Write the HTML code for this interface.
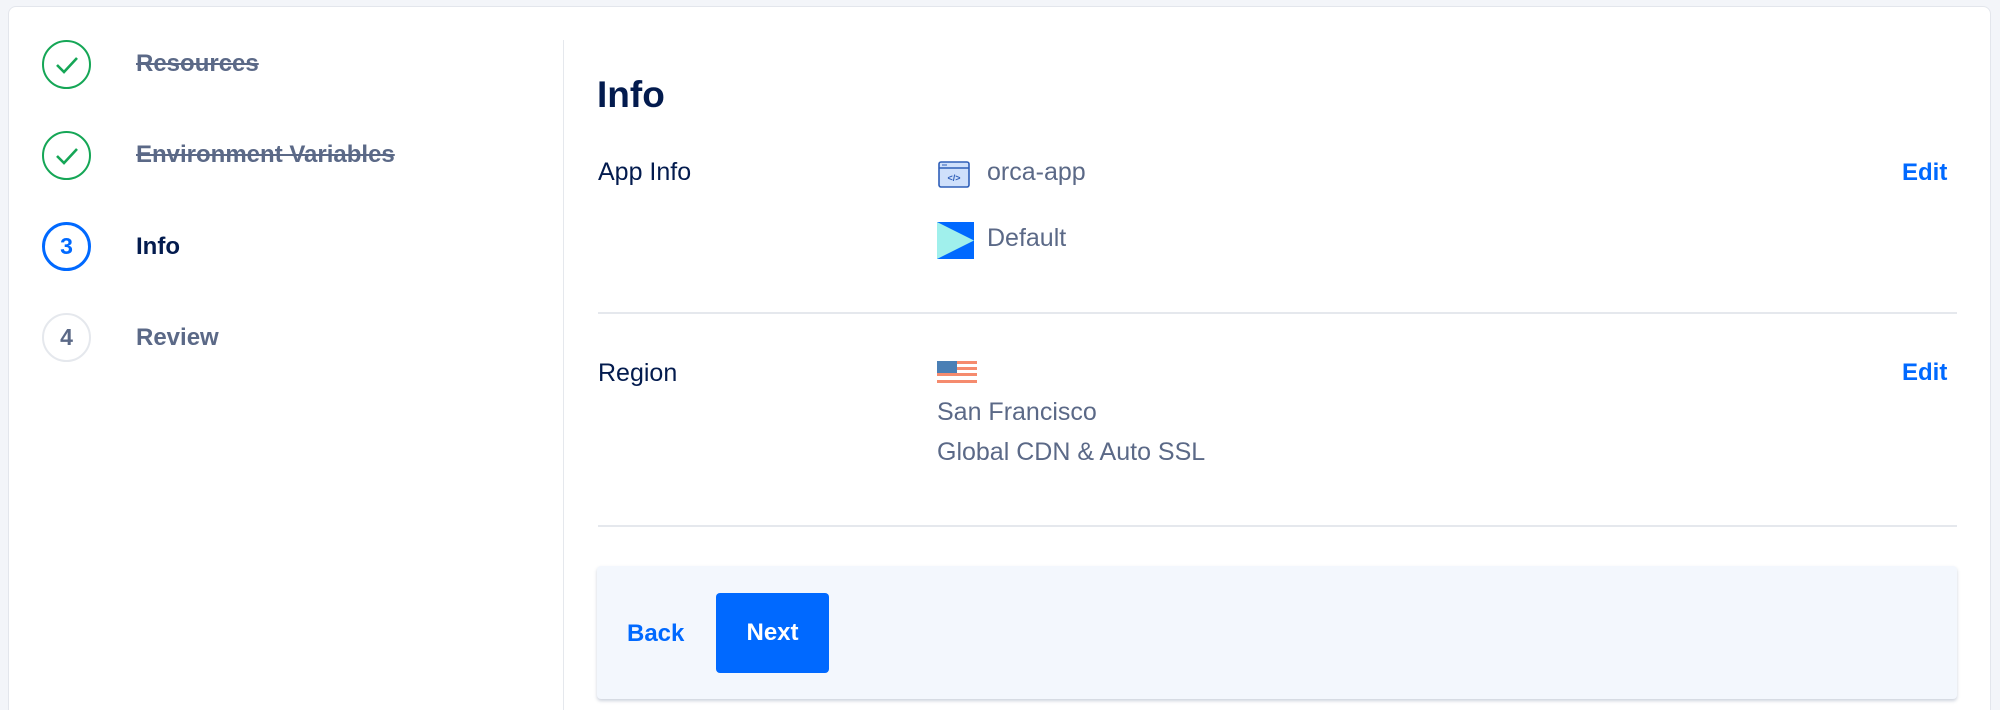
<!DOCTYPE html>
<html style="overflow:hidden;height:710px"><head><meta charset="utf-8"><style>
*{margin:0;padding:0;box-sizing:border-box}
body{width:2000px;height:710px;background:#f3f5f9;position:relative;overflow:hidden;font-family:"Liberation Sans",sans-serif}
.card{position:absolute;left:8px;top:6px;width:1983px;height:704px;background:#fff;border:1px solid #e3e6ec;border-bottom:none;border-radius:8px 8px 0 0}
.a{position:absolute;white-space:nowrap}
.c{position:absolute;left:42px;width:49px;height:49px;border-radius:50%;display:flex;align-items:center;justify-content:center;font-size:23px}
.lbl{position:absolute;left:136px;font-size:24px;line-height:24px}
.strike{color:#5b6987;text-decoration:line-through}
.t{font-size:25px;line-height:25px;color:#031b4e}
.g{font-size:25px;line-height:25px;color:#5b6987}
.edit{font-size:24px;line-height:24px;color:#0069ff;font-weight:bold}
</style></head><body>
<div class="card"></div>
<div class="c" style="top:40px;border:2px solid #15a656"><svg width="24" height="20" viewBox="0 0 24 20"><path d="M2 10 L9 17 L22 3" fill="none" stroke="#15a656" stroke-width="2.6"/></svg></div>
<div class="c" style="top:131px;border:2px solid #15a656"><svg width="24" height="20" viewBox="0 0 24 20"><path d="M2 10 L9 17 L22 3" fill="none" stroke="#15a656" stroke-width="2.6"/></svg></div>
<div class="c" style="top:222px;border:3px solid #0069ff;color:#0069ff;font-weight:bold">3</div>
<div class="c" style="top:313px;border:2px solid #e5e8ed;color:#5b6987;font-weight:bold">4</div>
<div class="lbl strike" style="top:52px;font-weight:bold">Resources</div>
<div class="lbl strike" style="top:143px;font-weight:bold">Environment Variables</div>
<div class="lbl" style="top:235px;color:#031b4e;font-weight:bold">Info</div>
<div class="lbl" style="top:326px;color:#5b6987;font-weight:bold">Review</div>
<div class="a" style="left:563px;top:40px;width:1px;height:680px;background:#e5e8ed"></div>

<div class="a" style="left:597px;top:76px;font-size:37px;line-height:38px;font-weight:bold;color:#031b4e">Info</div>
<div class="a t" style="left:598px;top:160px">App Info</div>
<svg class="a" style="left:938px;top:161px" width="32" height="27" viewBox="0 0 32 27"><rect x="1" y="1" width="30" height="25" rx="2" fill="#cfe0fb" stroke="#2f5fb8" stroke-width="1.6"/><line x1="1" y1="7" x2="31" y2="7" stroke="#2f5fb8" stroke-width="1.4"/><line x1="4" y1="4" x2="9" y2="4" stroke="#2f5fb8" stroke-width="1"/><text x="16" y="20" font-size="9" font-family="Liberation Sans" text-anchor="middle" fill="#2f5fb8" font-weight="bold">&lt;/&gt;</text></svg>
<div class="a g" style="left:987px;top:160px">orca-app</div>
<svg class="a" style="left:937px;top:222px" width="37" height="37" viewBox="0 0 37 37"><rect width="37" height="37" fill="#0069ff"/><path d="M0 0 L37 18.5 L0 37Z" fill="#a0f0ec"/></svg>
<div class="a g" style="left:987px;top:226px">Default</div>
<div class="a edit" style="left:1902px;top:161px">Edit</div>
<div class="a" style="left:598px;top:312px;width:1359px;height:2px;background:#e5e8ed"></div>
<div class="a t" style="left:598px;top:361px">Region</div>
<svg class="a" style="left:937px;top:361px" width="40" height="22" viewBox="0 0 40 22"><rect width="40" height="22" fill="#fff"/><rect y="0" width="40" height="3" fill="#f58b6e"/><rect y="6" width="40" height="3" fill="#f58b6e"/><rect y="12" width="40" height="3" fill="#f58b6e"/><rect y="19" width="40" height="3" fill="#f58b6e"/><rect width="20" height="12" fill="#4a7fb5"/></svg>
<div class="a edit" style="left:1902px;top:361px">Edit</div>
<div class="a g" style="left:937px;top:400px">San Francisco</div>
<div class="a g" style="left:937px;top:440px">Global CDN &amp; Auto SSL</div>
<div class="a" style="left:598px;top:525px;width:1359px;height:2px;background:#e5e8ed"></div>
<div class="a" style="left:597px;top:566px;width:1360px;height:133px;background:#f3f7fd;border-radius:4px;box-shadow:0 2px 3px rgba(60,80,120,.25)"></div>
<div class="a edit" style="left:627px;top:622px">Back</div>
<div class="a" style="left:716px;top:593px;width:113px;height:80px;background:#0069ff;border-radius:4px;color:#fff;font-size:24px;font-weight:bold;display:flex;align-items:center;justify-content:center">Next</div>
</body></html>
